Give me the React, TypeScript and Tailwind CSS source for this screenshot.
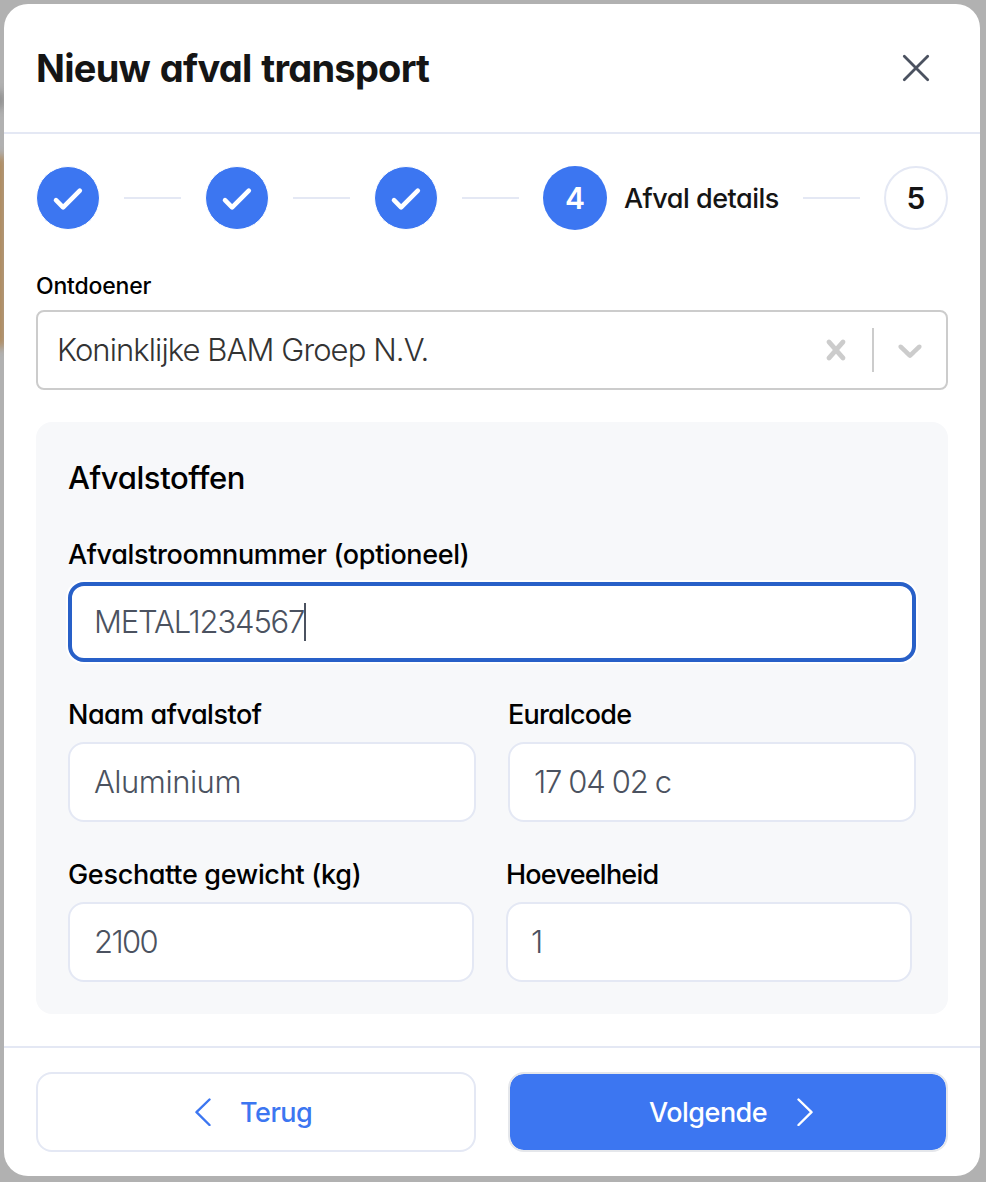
import type { ReactNode } from "react";

const LINE = "border-[#e4e8f4]";

function Done() {
  return (
    <div className="flex size-16 shrink-0 items-center justify-center rounded-full border border-white bg-[#3c76f1]">
      <svg className="size-[62px]" viewBox="0 0 62 62" fill="none" stroke="#fff" strokeWidth="4.6" strokeLinecap="round" strokeLinejoin="round">
        <path d="M19 33.2L26.1 40.3L42.8 23.6" />
      </svg>
    </div>
  );
}

function Rule() {
  return <div className="mx-6 h-0.5 flex-1 bg-[#e4e8f4]" />;
}

function Field({ label, tracking, children, focused }: { label: string; tracking: string; children: ReactNode; focused?: boolean }) {
  return (
    <div className="min-w-0 flex-1">
      <div className={`mb-2 flex h-10 items-center whitespace-nowrap pt-0.5 text-[27px] font-medium text-black ${tracking}`}>{label}</div>
      <div
        className={`flex h-20 items-center whitespace-nowrap rounded-2xl bg-white text-[31px] font-light text-[#4b5260] ${
          focused ? "border-4 border-[#2860c8] px-[22px] shadow-[0_0_0_2px_#fff]" : "border-2 border-[#e4e8f4] px-6"
        }`}
      >
        {children}
      </div>
    </div>
  );
}

export default function App() {
  return (
    <div className="relative h-[1182px] w-[986px] overflow-hidden bg-[#b1b1b1] p-1 pr-1.5 font-['Inter',sans-serif] [font-feature-settings:'cv11','ss03']">
      <div className="absolute -left-4 top-[156px] h-[191px] w-[22px] bg-[#b08a5c] blur-[4px]" />
      <div className="absolute -left-4 top-[92px] h-4 w-5 bg-[#8c8c8c] blur-[4px]" />
      <div className="relative flex h-[1172px] flex-col rounded-3xl bg-white">
        <header className={`flex h-[130px] items-center justify-between border-b-2 pl-8 pr-[50px] ${LINE}`}>
          <h1 className="whitespace-nowrap text-[38px] font-bold tracking-[-0.75px] text-[#151515] [word-spacing:1.5px]">Nieuw afval transport</h1>
          <svg className="size-7" viewBox="0 0 28 28" fill="none" stroke="#4b5260" strokeWidth="2.8" strokeLinecap="round">
            <path d="M2.3 2.3L25.7 25.7M25.7 2.3L2.3 25.7" />
          </svg>
        </header>
        <main className="flex-1 px-8 pt-8">
          <div className="flex h-16 items-center">
            <Done />
            <Rule />
            <Done />
            <Rule />
            <Done />
            <Rule />
            <div className="flex size-16 shrink-0 items-center justify-center rounded-full bg-[#3c76f1] text-[30px] font-semibold text-white">4</div>
            <div className="ml-4 w-[156px] whitespace-nowrap pl-px pt-0.5 text-[27px] font-medium tracking-[-0.5px] text-[#151515]">Afval details</div>
            <Rule />
            <div className={`flex size-16 shrink-0 items-center justify-center rounded-full border-2 text-[30px] font-semibold text-[#151515] ${LINE}`}>5</div>
          </div>
          <div className="mb-2 mt-10 flex h-8 items-center text-[23px] font-medium tracking-[-0.2px] text-black">Ontdoener</div>
          <div className="flex h-20 items-center rounded-lg border-2 border-[#ccc] pl-[19px]">
            <span className="flex-1 whitespace-nowrap text-[31px] font-light tracking-[-0.92px] text-[#333]">Koninklijke BAM Groep N.V.</span>
            <svg className="mr-4 size-10" viewBox="0 0 20 20" fill="#ccc">
              <path d="M14.348 14.849c-0.469 0.469-1.229 0.469-1.697 0l-2.651-3.030-2.651 3.029c-0.469 0.469-1.229 0.469-1.697 0-0.469-0.469-0.469-1.229 0-1.697l2.758-3.150-2.759-3.152c-0.469-0.469-0.469-1.228 0-1.697s1.228-0.469 1.697 0l2.652 3.031 2.651-3.031c0.469-0.469 1.228-0.469 1.697 0s0.469 1.229 0 1.697l-2.758 3.152 2.758 3.150c0.469 0.469 0.469 1.229 0 1.698z" />
            </svg>
            <span className="h-11 w-0.5 bg-[#ccc]" />
            <svg className="mx-4 size-10" viewBox="0 0 20 20" fill="#ccc">
              <path d="M4.516 7.548c0.436-0.446 1.043-0.481 1.576 0l3.908 3.747 3.908-3.747c0.533-0.481 1.141-0.446 1.574 0 0.436 0.445 0.408 1.197 0 1.615-0.406 0.418-4.695 4.502-4.695 4.502-0.217 0.223-0.502 0.335-0.787 0.335s-0.57-0.112-0.789-0.335c0 0-4.287-4.084-4.695-4.502s-0.436-1.17 0-1.615z" />
            </svg>
          </div>
          <section className="mt-8 h-[592px] rounded-2xl bg-[#f7f8fa] p-8">
            <h2 className="mb-8 flex h-12 items-center text-[31px] font-medium tracking-[-0.4px] text-black">Afvalstoffen</h2>
            <Field label="Afvalstroomnummer (optioneel)" tracking="tracking-[-0.36px]" focused>
              <span className="tracking-[-1.17px]">METAL1234567</span>
              <span className="h-[38px] w-0.5 bg-[#4b5260]" />
            </Field>
            <div className="mt-8 flex gap-8">
              <Field label="Naam afvalstof" tracking="tracking-[-0.5px]"><span className="tracking-[-0.5px]">Aluminium</span></Field>
              <Field label="Euralcode" tracking="tracking-[-0.8px]"><span className="tracking-[-1.3px]">17 04 02 c</span></Field>
            </div>
            <div className="mr-1 mt-8 flex gap-8">
              <Field label="Geschatte gewicht (kg)" tracking="tracking-[-0.32px]"><span className="tracking-[-1.6px]">2100</span></Field>
              <Field label="Hoeveelheid" tracking="tracking-[-0.77px]"><span className="-ml-px">1</span></Field>
            </div>
          </section>
        </main>
        <footer className={`flex h-[130px] gap-8 border-t-2 px-8 pt-6 ${LINE}`}>
          <button className={`flex h-20 w-[440px] shrink-0 items-center rounded-2xl border-2 pl-[156px] text-[27px] font-medium text-[#3c76f1] ${LINE}`}>
            <svg className="h-7 w-[18px]" viewBox="0 0 18 28" fill="none" stroke="currentColor" strokeWidth="2.4" strokeLinecap="round" strokeLinejoin="round">
              <path d="M15.5 1.5L2.5 14.2L15.5 27" />
            </svg>
            <span className="ml-7 pt-0.5 tracking-[-0.5px]">Terug</span>
          </button>
          <button className="flex h-20 w-[440px] shrink-0 items-center rounded-2xl border-2 border-[#e5e7eb] bg-[#3c76f1] bg-clip-padding pl-[139px] text-[27px] font-medium text-white">
            <span className="w-[147px] pt-0.5 text-left tracking-[-0.5px]">Volgende</span>
            <svg className="h-7 w-[18px]" viewBox="0 0 18 28" fill="none" stroke="currentColor" strokeWidth="2.4" strokeLinecap="round" strokeLinejoin="round">
              <path d="M2.5 1.5L15.5 14.2L2.5 27" />
            </svg>
          </button>
        </footer>
      </div>
    </div>
  );
}
